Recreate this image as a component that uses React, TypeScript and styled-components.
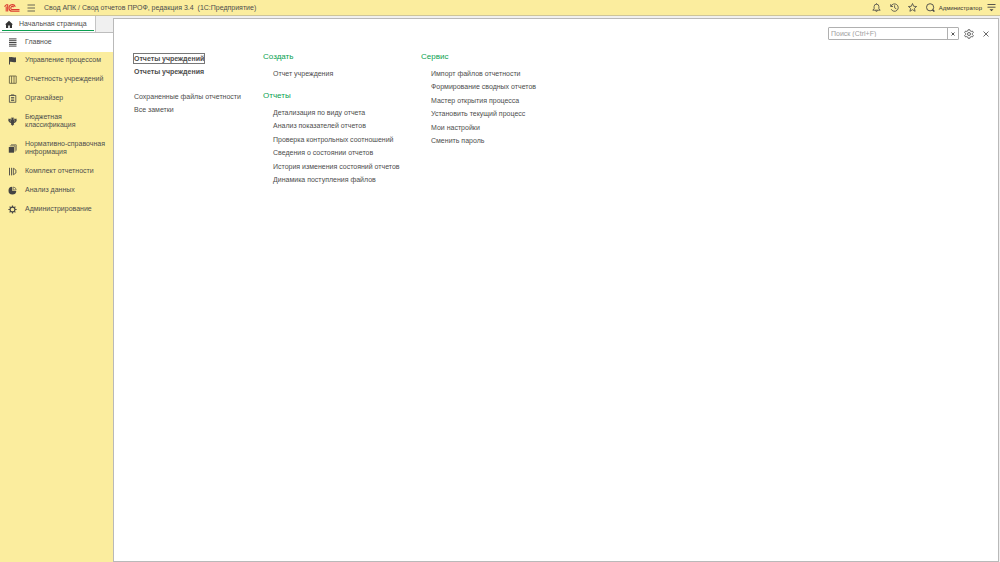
import React from "react";
import styled, { createGlobalStyle } from "styled-components";

const GlobalStyle = createGlobalStyle`
  * { box-sizing: border-box; }
  html, body, #root { height: 100%; }
  body {
    margin: 0;
    background: #f0f0f0;
    color: #4d4d4d;
    font-family: "Liberation Sans", Arial, sans-serif;
    font-size: 7px;
    line-height: 8px;
  }
  button, input { font: inherit; color: inherit; }
  ul { list-style: none; margin: 0; padding: 0; }
  svg { display: block; flex: none; }
`;

const Page = styled.div`
  display: flex;
  flex-direction: column;
  min-height: 100%;
`;

const TopBar = styled.header`
  display: flex;
  align-items: center;
  height: 16px;
  padding: 0 4px;
  background: #fbed9e;
  border-bottom: 1px solid #cdc59a;
`;

const AppTitle = styled.h1`
  margin: 0 auto 0 9px;
  font-size: 7px;
  font-weight: 400;
  white-space: pre;
`;

const IconButton = styled.button<{ $gap?: number }>`
  display: flex;
  margin: 0 0 0 ${(p) => p.$gap ?? 0}px;
  padding: 0;
  border: 0;
  background: none;
`;

const UserLink = styled.a`
  margin: 0 5px 0 4px;
  color: #333;
  font-size: 6px;
  text-decoration: none;
`;

const Body = styled.div`
  display: flex;
  flex: 1;
`;

const Side = styled.aside`
  display: flex;
  flex-direction: column;
  flex: none;
  width: 113px;
  background: #fbed9e;
`;

const TabStrip = styled.div`
  display: flex;
  height: 17px;
  background: #f0f0f0;
  border-bottom: 1px solid #bdbdbd;
`;

const Tab = styled.button`
  display: flex;
  align-items: center;
  gap: 6px;
  width: 96px;
  padding: 0 0 0 5px;
  border: 0;
  border-right: 1px solid #c4c4c4;
  background: linear-gradient(#0a9f50, #0a9f50) 2px 14px / 92px 1px no-repeat, #fff;
`;

const NavItem = styled.a<{ $active?: boolean }>`
  display: flex;
  align-items: center;
  gap: 8px;
  padding: ${(p) => (p.$active ? "5px 0 6px 8px" : "4px 0 7px 8px")};
  background: ${(p) => (p.$active ? "#fff" : "transparent")};
  color: inherit;
  text-decoration: none;
`;

const NavLabel = styled.span`
  white-space: pre-line;
`;

const NavIcon = styled.svg`
  width: 9px;
  height: 9px;
  margin: -1px 0;
`;

const Panel = styled.main`
  flex: 1;
  margin: 2px 1px 0 0;
  border: 1px solid #b9b9b9;
  background: #fff;
`;

const PanelTools = styled.div`
  display: flex;
  align-items: center;
  justify-content: flex-end;
  padding: 8px 9px 0 0;
`;

const Search = styled.div`
  display: flex;
  width: 131px;
  height: 13px;
  border: 1px solid #b0b0b0;
  border-radius: 1px;
`;

const SearchInput = styled.input`
  flex: 1;
  min-width: 0;
  padding: 0 2px;
  border: 0;
  outline: 0;
  background: none;
  &::placeholder { color: #a0a0a0; opacity: 1; }
`;

const ClearButton = styled.button`
  display: flex;
  align-items: center;
  justify-content: center;
  width: 11px;
  padding: 0;
  border: 0;
  border-left: 1px solid #b0b0b0;
  background: none;
`;

const Columns = styled.div`
  display: flex;
  padding: 10px 20px;
`;

const Column = styled.section<{ $width: number }>`
  width: ${(p) => p.$width}px;
`;

const FirstColumn = styled(Column)`
  padding-top: 2px;
`;

const Heading = styled.h2`
  margin: 0 0 4px;
  color: #0a9f50;
  font-size: 8px;
  font-weight: 400;
  line-height: 13px;
`;

const LinkList = styled.ul<{ $indent?: boolean; $after?: number }>`
  padding-left: ${(p) => (p.$indent ? 10 : 0)}px;
  margin-bottom: ${(p) => p.$after ?? 0}px;
`;

const LinkRow = styled.li<{ $bold?: boolean }>`
  line-height: 13px;
  font-weight: ${(p) => (p.$bold ? 700 : 400)};
  white-space: nowrap;
  &:nth-child(even) { line-height: 14px; }
`;

const CommandLink = styled.a<{ $focused?: boolean }>`
  padding: 1px 0;
  color: inherit;
  text-decoration: none;
  outline: ${(p) => (p.$focused ? "1px solid #777" : "none")};
`;

const line = { fill: "none", stroke: "#444", strokeWidth: 0.9 };

const navItems: { label: string; icon: React.ReactNode }[] = [
  { label: "Главное", icon: <path d="M1 .9h7.500M1 2.700h7.500M1 4.500h7.500M1 6.300h7.500M1 8.100h7.500" {...line} strokeWidth={1} /> },
  { label: "Управление процессом", icon: <path d="M1 1v7.500h1V6c1.500-.6 3 .8 6 0V1.200c-2.500.8-3.500-.8-6 0V1z" fill="#444" /> },
  { label: "Отчетность учреждений", icon: <path d="M1.400 1h6.800v7.300h-6.800zM3.600 1v7.300M6 1v7.300" {...line} stroke="#6b6544" /> },
  { label: "Органайзер", icon: <path d="M1.400 1.500h6.400v6.800h-6.400zM3 .9h3.200M3 3.500h3.200M3 5h3.200M3 6.500h3.200" {...line} strokeWidth={0.8} /> },
  {
    label: "Бюджетная\nклассификация",
    icon: (
      <>
        <path d="M3.400.6h.8l.3.500.3-.500h.8v1.400l-.5.500h1.200L6.800 1.200l.7.900.9-.6.300 1.900-.6 1.400-1.100.9-1.300.2.5 1.400-1.700 1.400-1.700-1.400.5-1.400-1.300-.2L.9 4.800.3 3.400.6 1.500l.9.600.7-.9.500 1.300h1.200l-.5-.500z" fill="#444" />
        <path d="M2.300 2.800v2M6.700 2.800v2" stroke="#fbed9e" strokeWidth={0.4} />
      </>
    ),
  },
  {
    label: "Нормативно-справочная\nинформация",
    icon: (
      <>
        <path d="M.8 3h5.200v5.700H.8z" fill="#444" />
        <path d="M1.800 1.900h5.200v5.800M3 .8h5.200v5.800" {...line} strokeWidth={0.7} />
      </>
    ),
  },
  {
    label: "Комплект отчетности",
    icon: (
      <>
        <path d="M1.500.8v7.600M3.600.8v7.600" {...line} />
        <path d="M5.400 1.200v6.600L7.900 6V3z" {...line} strokeWidth={0.8} />
      </>
    ),
  },
  {
    label: "Анализ данных",
    icon: (
      <>
        <path d="M4.200.8a3.900 3.900 0 1 0 4.100 4.200L4.200 4.800z" fill="#444" />
        <path d="M5.200 1v2.900h3a3.200 3.200 0 0 0-3-2.900z" {...line} strokeWidth={0.6} />
      </>
    ),
  },
  {
    label: "Администрирование",
    icon: (
      <>
        <circle cx="4.500" cy="4.500" r="2.400" {...line} strokeWidth={1.100} />
        <path d="M4.500.4v1.500M4.500 7.100v1.500M.4 4.500h1.500M7.100 4.500h1.500M1.600 1.600l1 1M6.400 6.400l1 1M1.600 7.400l1-1M6.400 2.600l1-1" {...line} strokeWidth={1.200} />
      </>
    ),
  },
];

const reports = [
  "Детализация по виду отчета",
  "Анализ показателей отчетов",
  "Проверка контрольных соотношений",
  "Сведения о состоянии отчетов",
  "История изменения состояний отчетов",
  "Динамика поступления файлов",
];

const service = [
  "Импорт файлов отчетности",
  "Формирование сводных отчетов",
  "Мастер открытия процесса",
  "Установить текущий процесс",
  "Мои настройки",
  "Сменить пароль",
];

type LinksProps = { items: string[]; indent?: boolean; bold?: boolean; after?: number; focused?: number };

function Links({ items, indent, bold, after, focused }: LinksProps) {
  return (
    <LinkList $indent={indent} $after={after}>
      {items.map((text, i) => (
        <LinkRow key={text} $bold={bold}>
          <CommandLink href="#" $focused={focused === i}>{text}</CommandLink>
        </LinkRow>
      ))}
    </LinkList>
  );
}

export default function App() {
  return (
    <Page>
      <GlobalStyle />
      <TopBar>
        <svg width="16" height="10" viewBox="0 0 16 10" fill="none" stroke="#dc3c32" strokeWidth="1.100">
          <path d="M.5 3.600L2.400 1.700h1.300V8.500M2.200 3.600V8.500" />
          <path d="M11.300 3.700A3.300 3.300 0 1 0 8.200 8.300h7.300M9.700 4.100A1.600 1.600 0 1 0 8.200 6.600h7.300" />
        </svg>
        <IconButton $gap={7} aria-label="Меню">
          <svg width="8" height="8" viewBox="0 0 8 8"><path d="M.5 1h7.500M.5 4h7.500M.5 7h7.500" {...line} strokeWidth={0.8} /></svg>
        </IconButton>
        <AppTitle>{"Свод АПК / Свод отчетов ПРОФ, редакция 3.4  (1С:Предприятие)"}</AppTitle>
        <IconButton aria-label="Уведомления">
          <svg width="9" height="9" viewBox="0 0 9 9"><path d="M.8 7.200h7.400L6.900 5.700V3.600a2.400 2.400 0 0 0-4.800 0v2.100zM3.600 7.500a.9.900 0 0 0 1.800 0M4.500.3v1" {...line} strokeWidth={0.8} /></svg>
        </IconButton>
        <IconButton $gap={9} aria-label="История">
          <svg width="9" height="9" viewBox="0 0 9 9"><path d="M1.100 3.200A3.700 3.700 0 1 1 1.200 6.200M.7 1.200v2.300H3M4.600 2.300v2.500L6.400 5.900" {...line} strokeWidth={0.8} /></svg>
        </IconButton>
        <IconButton $gap={9} aria-label="Избранное">
          <svg width="9" height="9" viewBox="0 0 9 9"><path d="M4.500.5l1.200 2.800 2.900.2-2.200 1.900.7 2.900-2.600-1.600-2.600 1.600.7-2.900L.4 3.500l2.900-.2z" {...line} strokeWidth={0.8} /></svg>
        </IconButton>
        <IconButton $gap={9} aria-label="Поиск">
          <svg width="9" height="9" viewBox="0 0 9 9"><circle cx="4.100" cy="4.300" r="3.600" {...line} /><path d="M6.500 6.700l1.900 1.900" {...line} strokeWidth={1.400} /></svg>
        </IconButton>
        <UserLink href="#">Администратор</UserLink>
        <IconButton aria-label="Сервис и настройки">
          <svg width="9" height="9" viewBox="0 0 9 9"><path d="M.5 1.500h8M.5 4.200h8" {...line} strokeWidth={0.9} /><path d="M2.500 6.200h4L4.500 8.200z" fill="#444" /></svg>
        </IconButton>
      </TopBar>
      <Body>
        <Side>
          <TabStrip>
            <Tab>
              <svg width="8" height="8" viewBox="0 0 8 8"><path d="M4 .8L0 4.500h1V8h2.200V5.500h1.600V8H7V4.500h1z" fill="#333" /></svg>
              Начальная страница
            </Tab>
          </TabStrip>
          <nav>
            {navItems.map((item, i) => (
              <NavItem key={item.label} href="#" $active={i === 0}>
                <NavIcon viewBox="0 0 9 9">{item.icon}</NavIcon>
                <NavLabel>{item.label}</NavLabel>
              </NavItem>
            ))}
          </nav>
        </Side>
        <Panel>
          <PanelTools>
            <Search>
              <SearchInput type="text" aria-label="Поиск" placeholder="Поиск (Ctrl+F)" />
              <ClearButton aria-label="Очистить">
                <svg width="4" height="4" viewBox="0 0 4 4"><path d="M.5.5l3 3M3.500.5l-3 3" {...line} /></svg>
              </ClearButton>
            </Search>
            <IconButton $gap={5} aria-label="Настройки">
              <svg width="10" height="10" viewBox="0 0 10 10"><circle cx="5" cy="5" r="1.500" {...line} strokeWidth={0.8} /><path d="M4.200.7h1.600l.4 1.200 1 .5 1.300-.3.8 1.400-.9 1v1l.9 1-.8 1.400-1.300-.3-1 .5-.4 1.200H4.200l-.4-1.200-1-.5-1.300.3-.8-1.400.9-1v-1l-.9-1 .8-1.400 1.300.3 1-.5z" {...line} strokeWidth={0.8} /></svg>
            </IconButton>
            <IconButton $gap={9} aria-label="Закрыть">
              <svg width="6" height="6" viewBox="0 0 6 6"><path d="M.5.5l5 5M5.500.5l-5 5" {...line} strokeWidth={0.8} /></svg>
            </IconButton>
          </PanelTools>
          <Columns>
            <FirstColumn $width={129}>
              <Links items={["Отчеты учреждений", "Отчеты учреждения"]} bold after={11} focused={0} />
              <Links items={["Сохраненные файлы отчетности", "Все заметки"]} />
            </FirstColumn>
            <Column $width={158}>
              <Heading>Создать</Heading>
              <Links items={["Отчет учреждения"]} indent after={9} />
              <Heading>Отчеты</Heading>
              <Links items={reports} indent />
            </Column>
            <Column $width={158}>
              <Heading>Сервис</Heading>
              <Links items={service} indent />
            </Column>
          </Columns>
        </Panel>
      </Body>
    </Page>
  );
}
